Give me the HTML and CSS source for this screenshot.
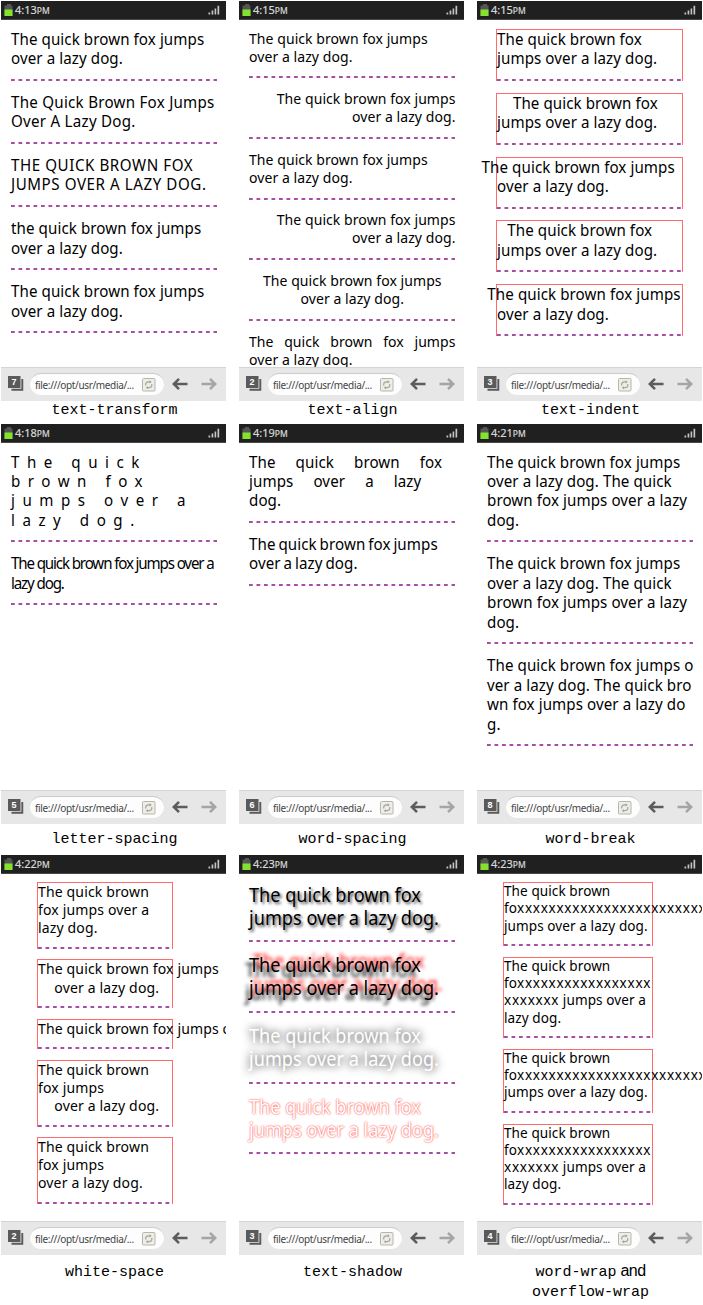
FILE: index.html
```html
<!DOCTYPE html>
<html lang="en">
<head>
<meta charset="utf-8">
<title>CSS text properties</title>
<link rel="stylesheet" href="styles.css">
</head>
<body>
<svg class="defs" aria-hidden="true">
  <symbol id="battery" viewBox="0 0 9 12"><path fill="#555" d="M3 0h4v1.5h1.5V12H.5V1.5H3z"/><path fill="#84e22e" d="M.5 5.5h8V12h-8z"/></symbol>
  <symbol id="signal" viewBox="0 0 12 10"><path fill="#c4c4c4" d="M.5 7.5h1.7V9.500H.5zM3.600 5.500h1.700v4H3.600zM6.600 3.500h1.600v6H6.600zM9.500.7h1.700v8.800H9.500z"/></symbol>
  <symbol id="tabs" viewBox="0 0 16 16"><path fill="#5a5a5a" d="M0 0h12.500v12H0z"/><path fill="none" stroke="#5a5a5a" stroke-width="1.900" d="M14.300 3v10.800H3.500"/></symbol>
  <symbol id="reload" viewBox="0 0 14 14"><rect x=".5" y=".5" width="12.500" height="12.500" rx="1" fill="#eeede6" stroke="#b7b6ae"/><path fill="none" stroke="#a5a5a0" stroke-width="1.200" d="M3.700 7.500V6q.3-2.200 2.800-2.200h2M9.800 6v1.500q-.3 2.200-2.800 2.200H5"/><path fill="#a5a5a0" d="M7.500 2.300 9.800 4 7.500 5.500zM6 8.200 3.700 9.700 6 11.300z"/></symbol>
  <symbol id="arrow" viewBox="0 0 16 12"><path fill="none" stroke="currentColor" stroke-width="2.500" d="M15.500 6H2M7 .9 1.800 6 7 11.100"/></symbol>
</svg>
<main class="gallery">

<figure class="cell">
  <div class="phone">
    <div class="status"><svg class="battery"><use href="#battery"/></svg><span>4:13<small>PM</small></span><svg class="signal"><use href="#signal"/></svg></div>
    <div class="screen transform">
      <p class="demo"><span>The quick brown fox jumps<br>over a lazy dog.</span></p>
      <p class="demo cap"><span>the quick brown fox jumps<br>over a lazy dog.</span></p>
      <p class="demo upper"><span>The quick brown fox<br>jumps over a lazy dog.</span></p>
      <p class="demo lower"><span>The quick brown fox jumps<br>over a lazy dog.</span></p>
      <p class="demo"><span>The quick brown fox jumps<br>over a lazy dog.</span></p>
    </div>
    <div class="toolbar"><div class="tabs"><svg><use href="#tabs"/></svg><b>7</b></div><div class="url"><span>file:///opt/usr/media/...</span><svg><use href="#reload"/></svg></div><svg class="back"><use href="#arrow"/></svg><svg class="fwd"><use href="#arrow"/></svg></div>
  </div>
  <figcaption><code>text-transform</code></figcaption>
</figure>

<figure class="cell">
  <div class="phone">
    <div class="status"><svg class="battery"><use href="#battery"/></svg><span>4:15<small>PM</small></span><svg class="signal"><use href="#signal"/></svg></div>
    <div class="screen align">
      <p class="demo"><span>The quick brown fox jumps<br>over a lazy dog.</span></p>
      <p class="demo right"><span>The quick brown fox jumps<br>over a lazy dog.</span></p>
      <p class="demo"><span>The quick brown fox jumps<br>over a lazy dog.</span></p>
      <p class="demo right"><span>The quick brown fox jumps<br>over a lazy dog.</span></p>
      <p class="demo center"><span>The quick brown fox jumps<br>over a lazy dog.</span></p>
      <p class="demo justify"><span>The quick brown fox jumps over a lazy dog.</span></p>
    </div>
    <div class="toolbar"><div class="tabs"><svg><use href="#tabs"/></svg><b>2</b></div><div class="url"><span>file:///opt/usr/media/...</span><svg><use href="#reload"/></svg></div><svg class="back"><use href="#arrow"/></svg><svg class="fwd"><use href="#arrow"/></svg></div>
  </div>
  <figcaption><code>text-align</code></figcaption>
</figure>

<figure class="cell">
  <div class="phone">
    <div class="status"><svg class="battery"><use href="#battery"/></svg><span>4:15<small>PM</small></span><svg class="signal"><use href="#signal"/></svg></div>
    <div class="screen boxed indent">
      <p class="demo"><span>The quick brown fox<br>jumps over a lazy dog.</span></p>
      <p class="demo in-big"><span>The quick brown fox<br>jumps over a lazy dog.</span></p>
      <p class="demo out-big"><span>The quick brown fox jumps<br>over a lazy dog.</span></p>
      <p class="demo in-small"><span>The quick brown fox<br>jumps over a lazy dog.</span></p>
      <p class="demo out-small"><span>The quick brown fox jumps<br>over a lazy dog.</span></p>
    </div>
    <div class="toolbar"><div class="tabs"><svg><use href="#tabs"/></svg><b>3</b></div><div class="url"><span>file:///opt/usr/media/...</span><svg><use href="#reload"/></svg></div><svg class="back"><use href="#arrow"/></svg><svg class="fwd"><use href="#arrow"/></svg></div>
  </div>
  <figcaption><code>text-indent</code></figcaption>
</figure>

<figure class="cell">
  <div class="phone">
    <div class="status"><svg class="battery"><use href="#battery"/></svg><span>4:18<small>PM</small></span><svg class="signal"><use href="#signal"/></svg></div>
    <div class="screen">
      <p class="demo four wide"><span>The quick<br>brown fox<br>jumps over a<br>lazy dog.</span></p>
      <p class="demo tight"><span>The quick brown fox jumps over a<br>lazy dog.</span></p>
    </div>
    <div class="toolbar"><div class="tabs"><svg><use href="#tabs"/></svg><b>5</b></div><div class="url"><span>file:///opt/usr/media/...</span><svg><use href="#reload"/></svg></div><svg class="back"><use href="#arrow"/></svg><svg class="fwd"><use href="#arrow"/></svg></div>
  </div>
  <figcaption><code>letter-spacing</code></figcaption>
</figure>

<figure class="cell">
  <div class="phone">
    <div class="status"><svg class="battery"><use href="#battery"/></svg><span>4:19<small>PM</small></span><svg class="signal"><use href="#signal"/></svg></div>
    <div class="screen">
      <p class="demo three words-wide"><span>The quick brown fox<br>jumps over a lazy<br>dog.</span></p>
      <p class="demo words-tight"><span>The quick brown fox jumps<br>over a lazy dog.</span></p>
    </div>
    <div class="toolbar"><div class="tabs"><svg><use href="#tabs"/></svg><b>6</b></div><div class="url"><span>file:///opt/usr/media/...</span><svg><use href="#reload"/></svg></div><svg class="back"><use href="#arrow"/></svg><svg class="fwd"><use href="#arrow"/></svg></div>
  </div>
  <figcaption><code>word-spacing</code></figcaption>
</figure>

<figure class="cell">
  <div class="phone">
    <div class="status"><svg class="battery"><use href="#battery"/></svg><span>4:21<small>PM</small></span><svg class="signal"><use href="#signal"/></svg></div>
    <div class="screen">
      <p class="demo four"><span>The quick brown fox jumps<br>over a lazy dog. The quick<br>brown fox jumps over a lazy<br>dog.</span></p>
      <p class="demo four"><span>The quick brown fox jumps<br>over a lazy dog. The quick<br>brown fox jumps over a lazy<br>dog.</span></p>
      <p class="demo four"><span>The quick brown fox jumps o<br>ver a lazy dog. The quick bro<br>wn fox jumps over a lazy do<br>g.</span></p>
    </div>
    <div class="toolbar"><div class="tabs"><svg><use href="#tabs"/></svg><b>8</b></div><div class="url"><span>file:///opt/usr/media/...</span><svg><use href="#reload"/></svg></div><svg class="back"><use href="#arrow"/></svg><svg class="fwd"><use href="#arrow"/></svg></div>
  </div>
  <figcaption><code>word-break</code></figcaption>
</figure>

<figure class="cell">
  <div class="phone">
    <div class="status"><svg class="battery"><use href="#battery"/></svg><span>4:22<small>PM</small></span><svg class="signal"><use href="#signal"/></svg></div>
    <div class="screen boxed space">
      <p class="demo"><span>The quick brown<br>fox jumps over a<br>lazy dog.</span></p>
      <p class="demo two-lines"><span>The quick brown fox jumps<br><i></i>over a lazy dog.</span></p>
      <p class="demo one-line"><span>The quick brown fox jumps over a lazy dog.</span></p>
      <p class="demo"><span>The quick brown<br>fox jumps<br><i></i>over a lazy dog.</span></p>
      <p class="demo"><span>The quick brown<br>fox jumps<br>over a lazy dog.</span></p>
    </div>
    <div class="toolbar"><div class="tabs"><svg><use href="#tabs"/></svg><b>2</b></div><div class="url"><span>file:///opt/usr/media/...</span><svg><use href="#reload"/></svg></div><svg class="back"><use href="#arrow"/></svg><svg class="fwd"><use href="#arrow"/></svg></div>
  </div>
  <figcaption><code>white-space</code></figcaption>
</figure>

<figure class="cell">
  <div class="phone">
    <div class="status"><svg class="battery"><use href="#battery"/></svg><span>4:23<small>PM</small></span><svg class="signal"><use href="#signal"/></svg></div>
    <div class="screen shadow">
      <p class="demo drop"><span>The quick brown fox<br>jumps over a lazy dog.</span></p>
      <p class="demo double"><span>The quick brown fox<br>jumps over a lazy dog.</span></p>
      <p class="demo glow"><span>The quick brown fox<br>jumps over a lazy dog.</span></p>
      <p class="demo outline"><span>The quick brown fox<br>jumps over a lazy dog.</span></p>
    </div>
    <div class="toolbar"><div class="tabs"><svg><use href="#tabs"/></svg><b>3</b></div><div class="url"><span>file:///opt/usr/media/...</span><svg><use href="#reload"/></svg></div><svg class="back"><use href="#arrow"/></svg><svg class="fwd"><use href="#arrow"/></svg></div>
  </div>
  <figcaption><code>text-shadow</code></figcaption>
</figure>

<figure class="cell">
  <div class="phone">
    <div class="status"><svg class="battery"><use href="#battery"/></svg><span>4:23<small>PM</small></span><svg class="signal"><use href="#signal"/></svg></div>
    <div class="screen boxed wrap">
      <p class="demo"><span>The quick brown<br>fo<em>xxxxxxxxxxxxxxxxxxxxxxxx</em><br>jumps over a lazy dog.</span></p>
      <p class="demo tall"><span>The quick brown<br>fo<em>xxxxxxxxxxxxxxxxx</em><br><em>xxxxxxx</em> jumps over a<br>lazy dog.</span></p>
      <p class="demo"><span>The quick brown<br>fo<em>xxxxxxxxxxxxxxxxxxxxxxxx</em><br>jumps over a lazy dog.</span></p>
      <p class="demo tall"><span>The quick brown<br>fo<em>xxxxxxxxxxxxxxxxx</em><br><em>xxxxxxx</em> jumps over a<br>lazy dog.</span></p>
    </div>
    <div class="toolbar"><div class="tabs"><svg><use href="#tabs"/></svg><b>4</b></div><div class="url"><span>file:///opt/usr/media/...</span><svg><use href="#reload"/></svg></div><svg class="back"><use href="#arrow"/></svg><svg class="fwd"><use href="#arrow"/></svg></div>
  </div>
  <figcaption><code>word-wrap</code> and<br><code>overflow-wrap</code></figcaption>
</figure>

</main>
</body>
</html>
```
FILE: styles.css
```css
* { box-sizing: border-box; }
body { margin: 0; background: #fff; color: #000; font-family: "Noto Sans", sans-serif; overflow: hidden; }
.defs { display: none; }
svg { display: block; flex: none; }

.gallery { display: grid; grid-template-columns: repeat(3, 225px); grid-template-rows: 423px 431px 449px; column-gap: 13px; padding: 1px 0 0 1px; }
.cell { margin: 0; display: flex; flex-direction: column; }
.phone { height: 400px; display: flex; flex-direction: column; overflow: hidden; background: #fff; }

/* status bar */
.status { flex: none; height: 19px; display: flex; align-items: center; padding: 0 6px 0 3px; background: #202020; border-bottom: 1px solid #484848; color: #dcdcdc; font-size: 11px; line-height: 18px; }
.status span { flex: 1; margin-left: 2px; -webkit-text-stroke: .2px #d0d0d0; }
.status small { font-size: 8.5px; }
.battery { width: 9px; height: 12px; }
.signal { width: 12px; height: 10px; }

/* page area; text is slightly condensed through --squeeze */
.screen { --fs: 16.2px; --lh: 19.4px; --h: 52px; --gap: 11.2px; --squeeze: .935; --drop: .5px; flex: 1; min-height: 0; overflow: hidden; padding: 8.600px 9px 0 9.500px; letter-spacing: .08px; }
.demo { height: var(--h); margin: 0 0 var(--gap); font-size: var(--fs); line-height: var(--lh); white-space: nowrap; background: linear-gradient(90deg, #a64da6 4px, transparent 4px) 0 100% / 7.500px 2px repeat-x; }
.demo > span { display: block; width: calc(100% / var(--squeeze)); transform: translate(0, var(--drop)) scaleX(var(--squeeze)); transform-origin: 0 0; }
.four { --h: 90.700px; }
.three { --h: 71.300px; }

.cap { text-transform: capitalize; letter-spacing: .270px; }
.upper { text-transform: uppercase; letter-spacing: .600px; }
.lower { text-transform: lowercase; }

.align { --fs: 15px; --lh: 18.100px; --h: 49.800px; --gap: 10.800px; --drop: -.5px; letter-spacing: .06px; }
.right { text-align: right; }
.center { text-align: center; }
.justify { text-align: justify; white-space: normal; }

.wide { letter-spacing: 8.050px; }
.tight { letter-spacing: -1.220px; }
.words-wide { word-spacing: 17.200px; }
.words-tight { word-spacing: -1.200px; }

.boxed .demo { border: solid #ff6b6b; border-width: 1px 1px 0; }
.boxed .demo > span { margin-top: -1px; }
.indent { --h: 52px; --gap: 11.800px; padding: 9px 19px 0 19px; }
.in-big { text-indent: 17px; }
.out-big { text-indent: -16.500px; }
.in-small { text-indent: 11px; }
.out-small { text-indent: -10.300px; }

.space { --fs: 15px; --lh: 18.100px; --h: 66.800px; --gap: 10.700px; --drop: .2px; padding: 8px 53px 0 36.400px; letter-spacing: .15px; }
.space i { display: inline-block; width: 17.500px; }
.two-lines { --h: 48.500px; }
.one-line { --h: 30.400px; }

.shadow { --fs: 19.400px; --lh: 23.200px; --h: 59.800px; --gap: 10.900px; --drop: 0px; letter-spacing: 0; }
.drop { text-shadow: 2px 2px 3px rgba(0, 0, 0, .7); }
.double { text-shadow: 4px -4px 4px rgba(255, 0, 0, .9), -4px 5px 4px rgba(0, 0, 0, .95); }
.glow { color: #fff; text-shadow: 0 0 10px #000; }
.outline { color: #fff; text-shadow: 0 0 2px #f00; }

.wrap { --fs: 14.500px; --lh: 17.300px; --h: 64px; --gap: 10.700px; --drop: .2px; padding: 8px 49px 0 26.400px; }
.wrap em { font-style: normal; letter-spacing: .770px; }
.tall { --h: 81.500px; }

/* browser toolbar */
.toolbar { flex: none; height: 34px; display: flex; align-items: center; padding: 0 9px 1px 7px; background: #e7e7e7; border-top: 1px solid #d4d4d4; }
.tabs { display: grid; width: 16px; height: 16px; }
.tabs > * { grid-area: 1 / 1; width: 16px; height: 16px; }
.tabs b { width: 12px; color: #fff; font: bold 9px/12px "Liberation Sans", sans-serif; text-align: center; }
.url { width: 134px; height: 22px; margin-left: 6px; padding: 0 8px 0 5px; display: flex; align-items: center; justify-content: space-between; border-radius: 11px; background: #fdfdfd; border-top: 1px solid #ccc; color: #444; font-size: 10px; letter-spacing: -.35px; white-space: nowrap; }
.url svg { width: 14px; height: 14px; }
.back, .fwd { width: 16px; height: 12px; }
.back { margin-left: 8px; color: #5c5c5c; }
.fwd { margin-left: auto; color: #a5a5a5; transform: scaleX(-1); }

figcaption { margin-top: -1px; padding: 0 0 0 2px; text-align: center; font: 16px/18px "Liberation Sans", Arial, sans-serif; letter-spacing: -.5px; }
.cell:nth-child(n+4) figcaption { padding-top: 6px; }
.cell:nth-child(n+7) figcaption { padding-top: 8px; }
code { font: 15px/18px "Courier New", "Liberation Mono", monospace; letter-spacing: 0; }
```
